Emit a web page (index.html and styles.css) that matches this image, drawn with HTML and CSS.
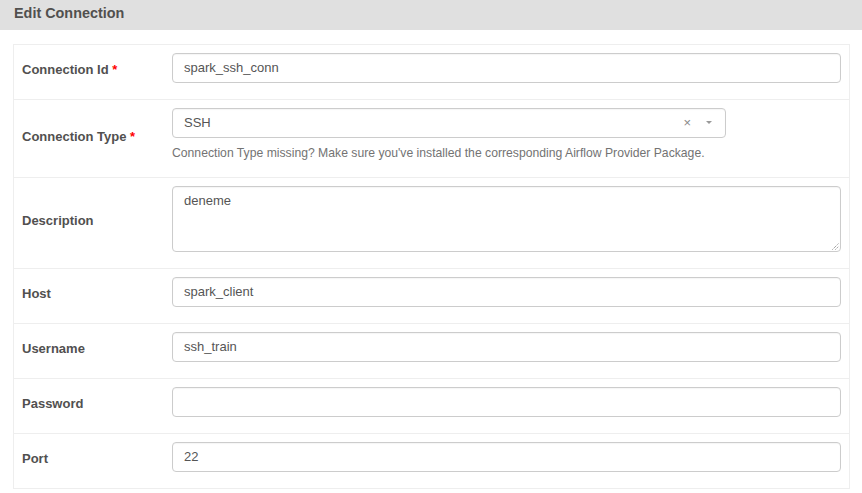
FILE: index.html
```html
<!DOCTYPE html>
<html>
<head>
<meta charset="utf-8">
<link rel="stylesheet" href="styles.css">
</head>
<body>
<div class="panel-title">Edit Connection</div>
<div class="form-wrap">
  <table class="form-table">
    <tr class="row">
      <td class="label">Connection Id <span class="req">*</span></td>
      <td class="field"><div class="input">spark_ssh_conn</div></td>
    </tr>
    <tr class="row">
      <td class="label">Connection Type <span class="req">*</span></td>
      <td class="field">
        <div class="select">
          <span class="sel-text">SSH</span>
          <span class="sel-clear">×</span>
          <span class="sel-arrow"></span>
        </div>
        <div class="help">Connection Type missing? Make sure you've installed the corresponding Airflow Provider Package.</div>
      </td>
    </tr>
    <tr class="row">
      <td class="label">Description</td>
      <td class="field">
        <div class="textarea">deneme
          <svg class="grip" width="7" height="7" viewBox="0 0 7 7"><path d="M0.5 6.5 L6.5 0.5 M3.5 6.5 L6.5 3.5" stroke="#777" stroke-width="1" stroke-dasharray="1 1" fill="none"/></svg>
        </div>
      </td>
    </tr>
    <tr class="row">
      <td class="label">Host</td>
      <td class="field"><div class="input">spark_client</div></td>
    </tr>
    <tr class="row">
      <td class="label">Username</td>
      <td class="field"><div class="input">ssh_train</div></td>
    </tr>
    <tr class="row">
      <td class="label">Password</td>
      <td class="field"><div class="input"></div></td>
    </tr>
    <tr class="row">
      <td class="label">Port</td>
      <td class="field"><div class="input">22</div></td>
    </tr>
  </table>
</div>
</body>
</html>
```
FILE: styles.css
```css
html, body {
  margin: 0;
  padding: 0;
  background: #fff;
  font-family: "Liberation Sans", Arial, sans-serif;
  color: #51504f;
  overflow: hidden;
}
.panel-title {
  background: #e0e0e0;
  height: 30px;
  line-height: 27px;
  padding-left: 14px;
  font-size: 14.4px;
  font-weight: bold;
  color: #51504f;
}
.form-wrap {
  padding: 14px 12px 0 13px;
}
.form-table {
  width: 837px;
  border-collapse: collapse;
  border-left: 1px solid #eeeeee;
  border-right: 1px solid #eeeeee;
}
.row td {
  border-top: 1px solid #eeeeee;
  border-bottom: 1px solid #eeeeee;
}
.label {
  width: 134px;
  padding: 8px 8px 13px 8px;
  font-size: 13px;
  font-weight: bold;
  vertical-align: middle;
  color: #51504f;
}
.req {
  color: #ff0000;
}
.field {
  padding: 8px 8px 16px 8px;
  vertical-align: top;
}
.input, .select, .textarea {
  box-sizing: border-box;
  border: 1px solid #cccccc;
  border-radius: 4px;
  height: 30px;
  padding: 0 11px;
  font-size: 13px;
  line-height: 28px;
  color: #555555;
  background: #fff;
  box-shadow: inset 0 1px 1px rgba(0,0,0,0.04);
}
.select {
  width: 554px;
  display: flex;
  align-items: center;
  line-height: 26px;
}
.sel-text {
  flex: 1;
}
.sel-clear {
  font-size: 13px;
  color: #888;
  margin-right: 15px;
}
.sel-arrow {
  width: 0;
  height: 0;
  border-left: 3px solid transparent;
  border-right: 3px solid transparent;
  border-top: 3px solid #999;
  margin-right: 2px;
  margin-top: -1px;
}
.help {
  font-size: 12.2px;
  color: #737373;
  margin-top: 7px;
  line-height: 16px;
}
.textarea {
  height: 66px;
  line-height: 14px;
  padding-top: 7px;
  position: relative;
}
.grip {
  position: absolute;
  right: 1px;
  bottom: 1px;
}
```
